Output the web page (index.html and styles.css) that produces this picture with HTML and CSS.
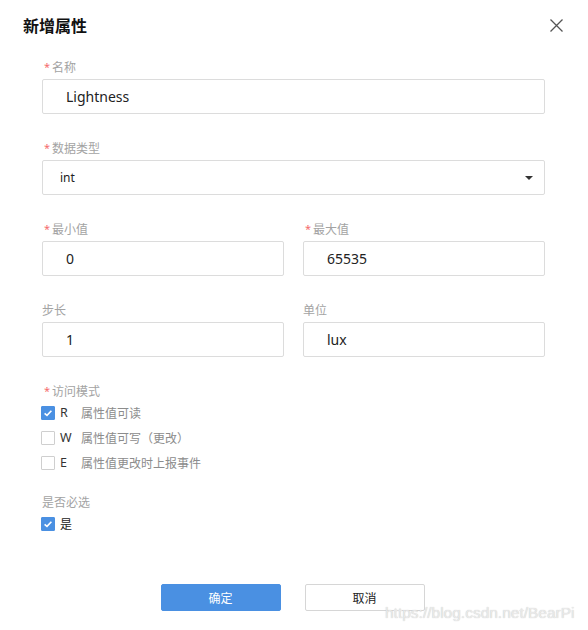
FILE: index.html
```html
<!DOCTYPE html>
<html lang="zh-CN">
<head>
<meta charset="utf-8">
<title>新增属性</title>
<link rel="stylesheet" href="styles.css">
</head>
<body>
<div class="dialog">
  <div class="header">
    <div class="title">新增属性</div>
    <svg class="close" width="13" height="13" viewBox="0 0 13 13"><path d="M0.5 0.5 L12.5 12.5 M12.5 0.5 L0.5 12.5" stroke="#555" stroke-width="1.3" fill="none"/></svg>
  </div>
  <div class="form">
    <div class="field">
      <div class="label req-label"><span class="req">*</span>名称</div>
      <div class="input">Lightness</div>
    </div>
    <div class="field">
      <div class="label req-label"><span class="req">*</span>数据类型</div>
      <div class="input select"><span>int</span><span class="caret"></span></div>
    </div>
    <div class="field two">
      <div>
        <div class="label req-label"><span class="req">*</span>最小值</div>
        <div class="input">0</div>
      </div>
      <div>
        <div class="label req-label"><span class="req">*</span>最大值</div>
        <div class="input">65535</div>
      </div>
    </div>
    <div class="field two">
      <div>
        <div class="label">步长</div>
        <div class="input">1</div>
      </div>
      <div>
        <div class="label">单位</div>
        <div class="input">lux</div>
      </div>
    </div>
    <div class="group">
      <div class="label req-label"><span class="req">*</span>访问模式</div>
      <div class="check-row">
        <span class="box checked"><svg width="14" height="14" viewBox="0 0 14 14"><polyline points="3.6,7.3 6,9.4 10.4,4.7" fill="none" stroke="#fff" stroke-width="1.6"/></svg></span>
        <span class="letter">R</span><span class="desc">属性值可读</span>
      </div>
      <div class="check-row">
        <span class="box"></span>
        <span class="letter">W</span><span class="desc">属性值可写（更改）</span>
      </div>
      <div class="check-row">
        <span class="box"></span>
        <span class="letter">E</span><span class="desc">属性值更改时上报事件</span>
      </div>
    </div>
    <div class="group second">
      <div class="label">是否必选</div>
      <div class="check-row">
        <span class="box checked"><svg width="14" height="14" viewBox="0 0 14 14"><polyline points="3.6,7.3 6,9.4 10.4,4.7" fill="none" stroke="#fff" stroke-width="1.6"/></svg></span>
        <span class="yes">是</span>
      </div>
    </div>
  </div>
  <div class="footer">
    <button class="btn primary">确定</button>
    <button class="btn">取消</button>
  </div>
  <div class="watermark">https://blog.csdn.net/BearPi</div>
</div>
</body>
</html>
```
FILE: styles.css
```css
* { box-sizing: border-box; }
html, body { margin: 0; padding: 0; background: #fff; }
body {
  font-family: "Noto Sans", "Noto Sans CJK SC", sans-serif;
  color: #333;
}
.dialog {
  position: relative;
  width: 588px;
  height: 630px;
  overflow: hidden;
}
.header {
  height: 50px;
  display: flex;
  align-items: center;
  justify-content: space-between;
  padding: 0 25px 0 23px;
}
.title {
  font-family: "Noto Sans CJK SC", sans-serif;
  font-size: 16px;
  font-weight: 700;
  color: #111;
  line-height: 20px;
}
.close { display: block; }
.form {
  padding: 8px 43px 0 42px;
}
.field { margin-bottom: 25px; }
.two {
  display: grid;
  grid-template-columns: 1fr 1fr;
  column-gap: 19px;
}
.label {
  font-family: "Noto Sans CJK SC", sans-serif;
  font-size: 12px;
  line-height: 18px;
  height: 18px;
  color: #a3a3a3;
  margin-bottom: 3px;
}
.req-label { padding-left: 2px; }
.req {
  display: inline-block;
  width: 8px;
  font-family: "Noto Sans", sans-serif;
  font-size: 11px;
  color: #f56c6c;
  vertical-align: top;
  line-height: 18px;
}
.input {
  height: 35px;
  border: 1px solid #dcdcdc;
  border-radius: 2px;
  padding-left: 23px;
  font-size: 14px;
  line-height: 33px;
  color: #222;
}
.select {
  display: flex;
  align-items: center;
  justify-content: space-between;
  padding-left: 17px;
  padding-right: 11px;
  font-size: 12px;
}
.caret {
  width: 0;
  height: 0;
  border-left: 4px solid transparent;
  border-right: 4px solid transparent;
  border-top: 4px solid #333;
}
.group .label { margin-bottom: 0; }
.group.second { margin-top: 18px; }
.check-row {
  height: 25px;
  display: flex;
  align-items: center;
  font-size: 12px;
}
.box {
  width: 14px;
  height: 14px;
  border: 1px solid #cfcfcf;
  border-radius: 1px;
  background: #fff;
  margin-left: -1px;
  margin-right: 5px;
  display: flex;
  align-items: center;
  justify-content: center;
  flex: none;
}
.box.checked {
  background: #4a90e2;
  border-color: #4a90e2;
}
.box svg { display: block; flex: none; }
.letter {
  width: 21px;
  color: #333;
  font-family: "Noto Sans", sans-serif;
  font-size: 12.5px;
}
.desc {
  font-family: "Noto Sans CJK SC", sans-serif;
  color: #8c8c8c;
}
.yes {
  font-family: "Noto Sans CJK SC", sans-serif;
  color: #222;
}
.footer {
  margin-top: 48px;
  display: flex;
  justify-content: center;
  gap: 24px;
  padding-right: 3px;
}
.btn {
  width: 120px;
  height: 27px;
  border: 1px solid #d6d6d6;
  border-radius: 2px;
  background: #fff;
  font-family: "Noto Sans CJK SC", sans-serif;
  font-size: 12px;
  color: #222;
  padding: 0;
  line-height: 25px;
}
.btn.primary {
  background: #4a90e2;
  border-color: #4a90e2;
  color: #fff;
}
.watermark {
  position: absolute;
  left: 385px;
  top: 603px;
  font-family: "Liberation Sans", Arial, sans-serif;
  font-size: 15.5px;
  line-height: 20px;
  color: rgba(240, 240, 240, 0.85);
  text-shadow: 0 0 1px #bdbdbd;
  white-space: nowrap;
}
```
